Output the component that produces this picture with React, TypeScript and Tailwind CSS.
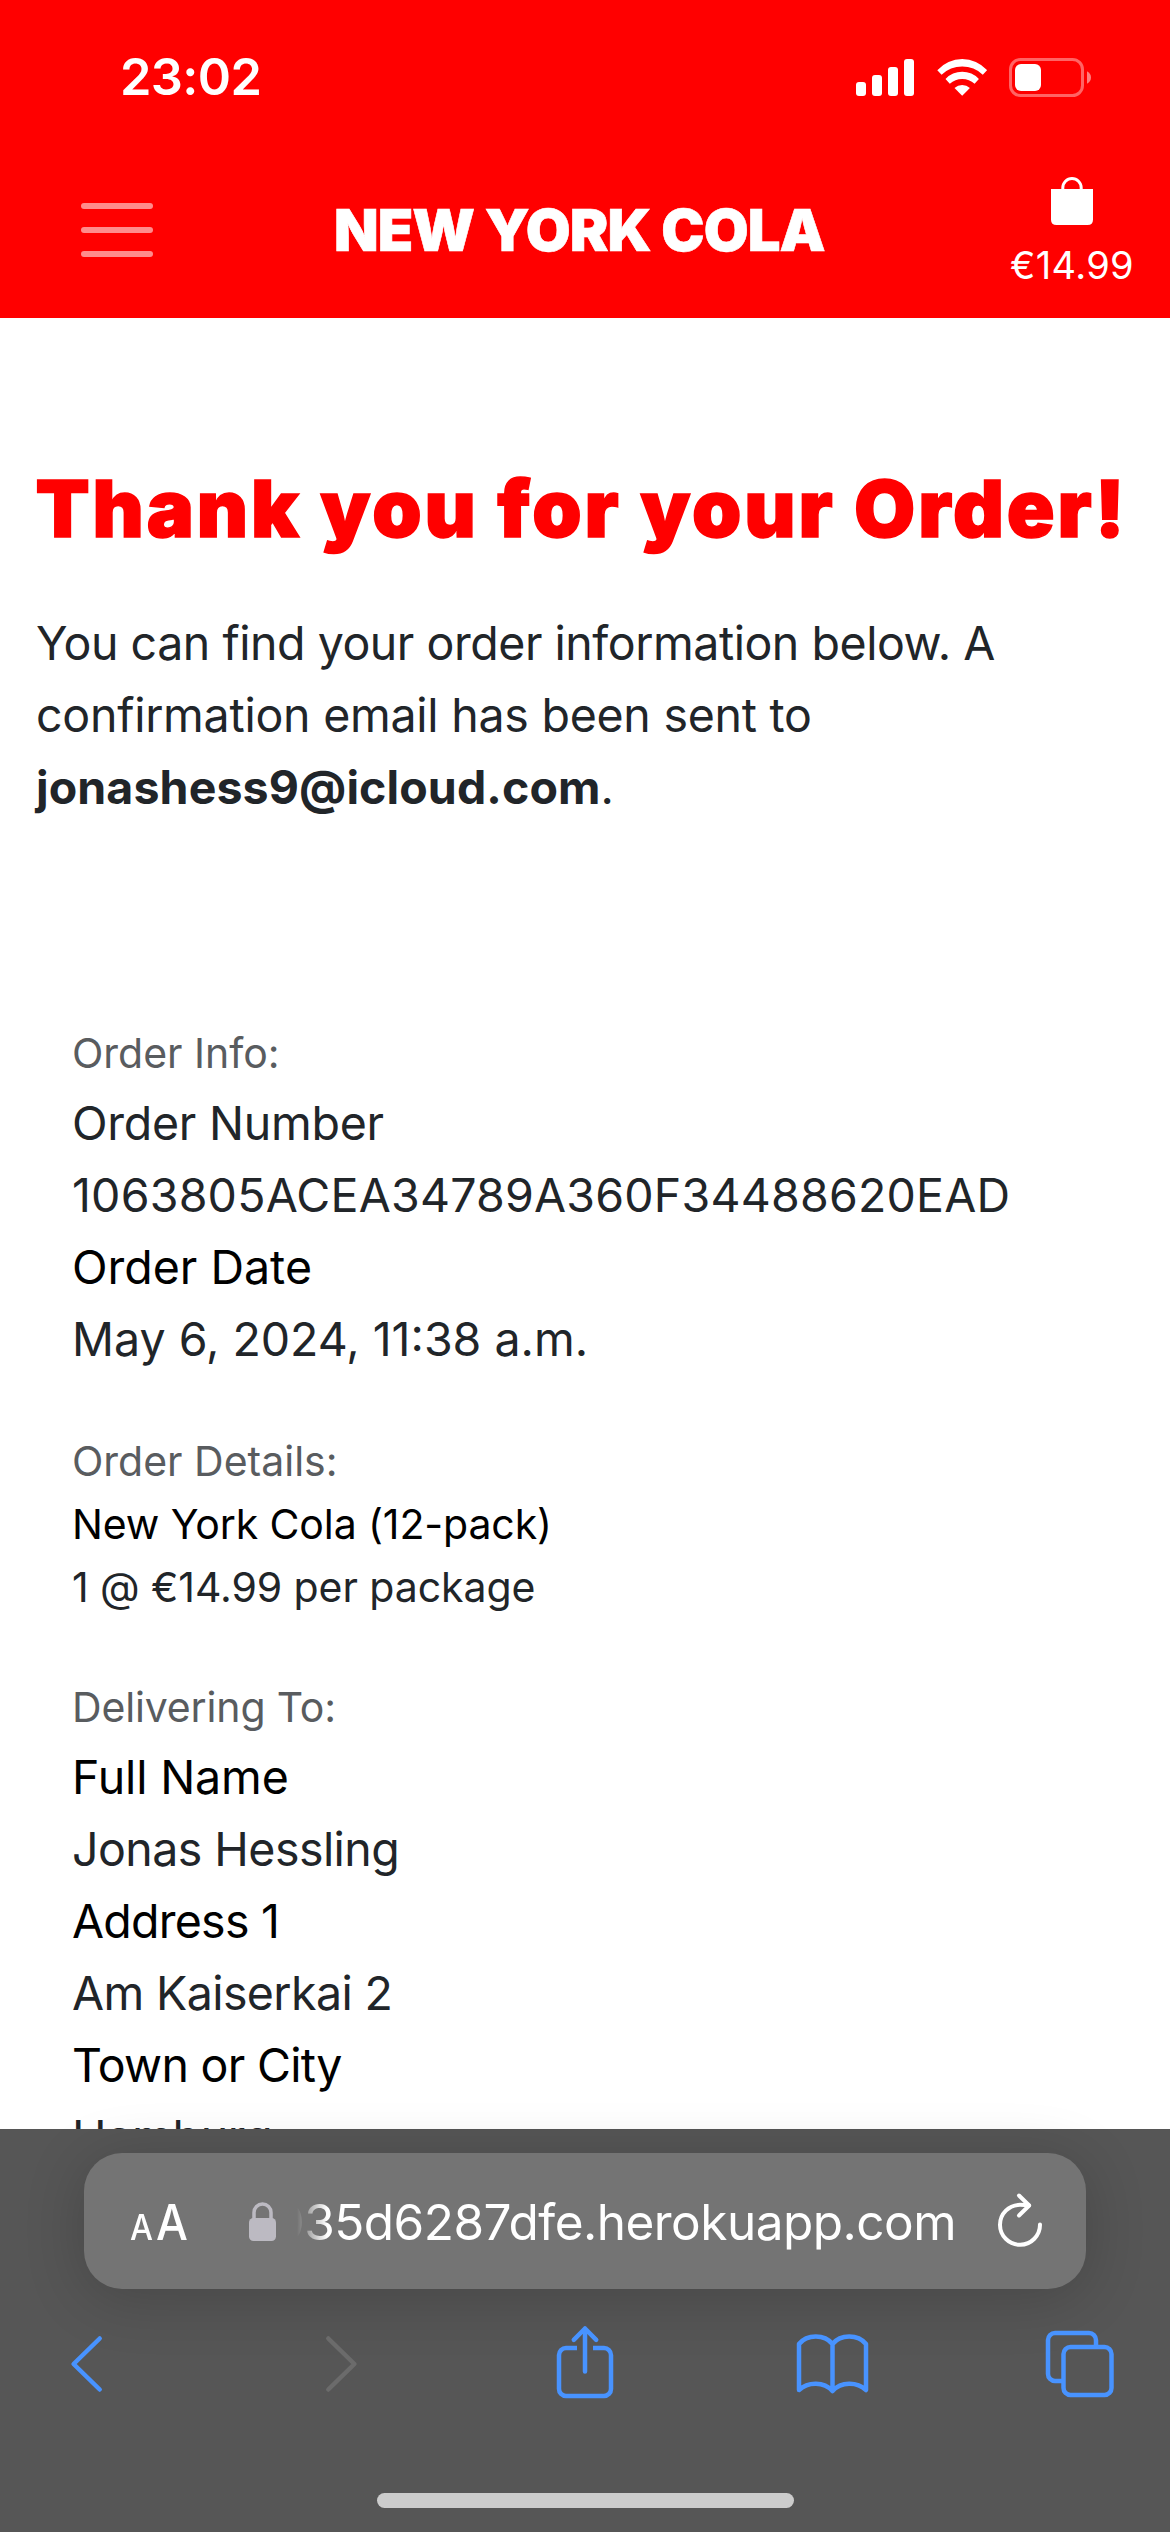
import React from "react";

function StatusIcons() {
  return (
    <div className="flex items-center">
      <svg className="h-[37px] w-[58px]" viewBox="0 0 58 37" fill="#fff">
        <rect x="0" y="23" width="10" height="14" rx="3" />
        <rect x="16" y="16" width="10" height="21" rx="3" />
        <rect x="32" y="8" width="10" height="29" rx="3" />
        <rect x="48" y="0" width="10" height="37" rx="3" />
      </svg>
      <svg className="ml-[22.5px] h-[37px] w-[50.5px]" viewBox="0 0 50.5 37" fill="#fff">
        <path d="M.3 11.2A33.5 33.5 0 0 1 50.1 11.2L45.8 15.8A29.5 29.5 0 0 0 4.6 15.8Z" />
        <path d="M8.5 20A22.8 22.8 0 0 1 41.9 20L37.6 24.7A18.7 18.7 0 0 0 12.8 24.7Z" />
        <path d="M17.5 29A11.4 11.4 0 0 1 32.9 29L25.2 36.8Z" />
      </svg>
      <svg className="ml-[22px] h-[39px] w-[82px]" viewBox="0 0 82 39">
        <rect x="1.5" y="1.5" width="72" height="36" rx="10" fill="none" stroke="#ff6464" strokeWidth="3" />
        <rect x="6" y="6" width="26" height="27" rx="6" fill="#fff" />
        <path d="M78 13.3Q82 15.5 82 19.5T78 25.7Z" fill="#ff7d7d" />
      </svg>
    </div>
  );
}

function Header() {
  return (
    <header className="h-[318px] shrink-0 bg-[#ff0000] text-white">
      <div className="flex h-[155px] items-center justify-between pr-[79px] pl-[120px]">
        <span className="text-[50.5px] leading-none font-semibold tracking-[-0.63px]">23:02</span>
        <StatusIcons />
      </div>
      <div className="flex h-[150px] items-center">
        <button className="ml-[81px] flex w-[72px] flex-col gap-[18px]">
          <span className="h-[6px] rounded-[3px] bg-[#ff8c8c]" />
          <span className="h-[6px] rounded-[3px] bg-[#ff8c8c]" />
          <span className="h-[6px] rounded-[3px] bg-[#ff8c8c]" />
        </button>
        <span className="ml-[181px] text-[58px] leading-none font-black tracking-[-0.95px] whitespace-nowrap [-webkit-text-stroke:0.6px_white]">
          NEW YORK COLA
        </span>
        <div className="mr-[36px] ml-auto flex flex-col items-center self-start pt-[22px]">
          <svg className="h-[48px] w-[42px]" viewBox="0 0 42 48">
            <path d="M0 12H42V42.500Q42 48 36.500 48H5.500Q0 48 0 42.500Z" fill="#fff" />
            <path d="M11.800 13V10.700a9.200 9.200 0 0 1 18.400 0V13" fill="none" stroke="#fff" strokeWidth="3" />
          </svg>
          <span className="mt-[18px] text-[38px] leading-[44px] tracking-[0.34px]">€14.99</span>
        </div>
      </div>
    </header>
  );
}

function Label({ children }: { children: React.ReactNode }) {
  return <h2 className="text-[41px] leading-[63px] text-[#595c5f]">{children}</h2>;
}

function OrderPage() {
  return (
    <main className="h-[1811px] shrink-0 overflow-hidden text-[46.5px] leading-[72px] whitespace-nowrap text-[#212529]">
      <h1 className="mt-[142px] pl-[35.5px] text-[79px] leading-[96px] font-black tracking-[2.87px] text-[#ff0000] [-webkit-text-stroke:1.5px_#ff0000]">
        Thank you for your Order!
      </h1>
      <p className="mt-[51px] pl-[36px]">
        <span className="tracking-[-0.46px]">You can find your order information below. A</span>
        <br />
        <span className="tracking-[-0.25px]">confirmation email has been sent to</span>
        <br />
        <strong className="font-bold tracking-[0.1px]">jonashess9@icloud.com</strong>.
      </p>
      <div className="mt-[199px] pl-[72px]">
        <section>
          <Label>Order Info:</Label>
          <div className="mt-[2px]">
            <p className="tracking-[-0.25px]">Order Number</p>
            <p className="tracking-[0.21px]">1063805ACEA34789A360F34488620EAD</p>
            <p className="text-black">Order Date</p>
            <p>May 6, 2024, 11:38 a.m.</p>
          </div>
        </section>
        <section className="mt-[55px]">
          <Label>Order Details:</Label>
          <p className="text-[41px] leading-[63px] tracking-[-0.11px] text-black">New York Cola (12-pack)</p>
          <p className="text-[41px] leading-[63px] tracking-[-0.07px]">1 @ €14.99 per package</p>
        </section>
        <section className="mt-[57px] tracking-[-0.15px]">
          <Label>Delivering To:</Label>
          <div className="mt-[2px]">
            <p className="text-black">Full Name</p>
            <p className="tracking-[-0.55px]">Jonas Hessling</p>
            <p className="tracking-[-0.75px] text-black">Address 1</p>
            <p className="tracking-[-0.6px]">Am Kaiserkai 2</p>
            <p className="tracking-[-0.7px] text-black">Town or City</p>
            <p className="tracking-[-0.3px]">Hamburg</p>
          </div>
        </section>
      </div>
    </main>
  );
}

function AddressBar() {
  return (
    <div className="ml-[84px] flex h-[136px] w-[1002px] items-center rounded-[38px] bg-[#747474] text-white shadow-[0_8px_60px_rgba(0,0,0,0.18)]">
      <div className="ml-[46px] flex w-[60px] items-baseline pt-[7px] leading-[60px] font-medium">
        <span className="w-[27px] origin-left scale-x-90 text-[36px]">A</span>
        <span className="origin-left scale-x-90 text-[50px]">A</span>
      </div>
      <svg className="ml-[59px] h-[39px] w-[27px]" viewBox="0 0 27 39">
        <rect x="0" y="16" width="27" height="23" rx="4.500" fill="#bcbac2" />
        <path d="M5 18V10.500a8.500 8.500 0 0 1 17 0V18" fill="none" stroke="#bcbac2" strokeWidth="3.500" />
      </svg>
      <div className="ml-[17px] flex w-[663px] justify-end overflow-hidden pt-[2px] text-[49.5px] leading-[64px] tracking-[-0.52px] whitespace-nowrap [mask-image:linear-gradient(to_right,transparent_4px,black_34px)]">
        035d6287dfe.herokuapp.com
      </div>
      <svg className="ml-[40px] h-[60px] w-[48px]" viewBox="0 0 48 60" fill="none" stroke="#fff" strokeWidth="4" strokeLinecap="round" strokeLinejoin="round">
        <path d="M44 33.500A20 20 0 1 1 24 13.800Q29 13.800 33 14.500" />
        <path d="M23 4.500L33.200 14.500L23 24.500" />
      </svg>
    </div>
  );
}

function NavIcons() {
  return (
    <nav className="mt-[35px] flex h-[76px] [&_svg]:h-[76px] [&_svg]:shrink-0 [&_svg]:fill-none [&_svg]:stroke-[#4893ff] [&_svg]:stroke-[4.5]">
      <svg className="ml-[70px] w-[34px]" viewBox="0 0 34 76" strokeLinecap="round" strokeLinejoin="round">
        <path d="M29.700 14.500L3.600 40L29.700 65.500" />
      </svg>
      <svg className="ml-[220px] w-[34px] stroke-[#6b6b6b]!" viewBox="0 0 34 76" strokeLinecap="round" strokeLinejoin="round">
        <path d="M4.300 14.500L30.400 40L4.300 65.500" />
      </svg>
      <svg className="ml-[197px] w-[60px]" viewBox="0 0 60 76" strokeLinejoin="round">
        <path d="M22 24H11a7 7 0 0 0-7 7v34a7 7 0 0 0 7 7h38a7 7 0 0 0 7-7V31a7 7 0 0 0-7-7H38" />
        <path d="M30 4.500V47.500M18.800 15.800L30 4.500L41.200 15.800" strokeLinecap="round" />
      </svg>
      <svg className="ml-[180px] w-[75px]" viewBox="0 -8 75 76" strokeLinecap="round" strokeLinejoin="round">
        <path d="M37.500 12C29.500 2 12 2 4 12V58C13 49.500 29 49.500 37.500 59C46 49.500 62 49.500 71 58V12C63 2 45.500 2 37.500 12V59" />
      </svg>
      <svg className="ml-[174px] w-[72px]" viewBox="0 -5 72 76">
        <path d="M52 18V11a7 7 0 0 0-7-7H11a7 7 0 0 0-7 7v34a7 7 0 0 0 7 7h8" />
        <rect x="19.500" y="18" width="48" height="48" rx="7" />
      </svg>
    </nav>
  );
}

export default function App() {
  return (
    <div className="flex h-[2532px] w-[1170px] flex-col overflow-hidden bg-white font-['Inter',sans-serif]">
      <Header />
      <OrderPage />
      <footer className="relative h-[403px] shrink-0 bg-[#565656] pt-[24px]">
        <AddressBar />
        <NavIcons />
        <div className="mx-auto mt-[93px] h-[15px] w-[417px] rounded-full bg-[#cccccc]" />
      </footer>
    </div>
  );
}
